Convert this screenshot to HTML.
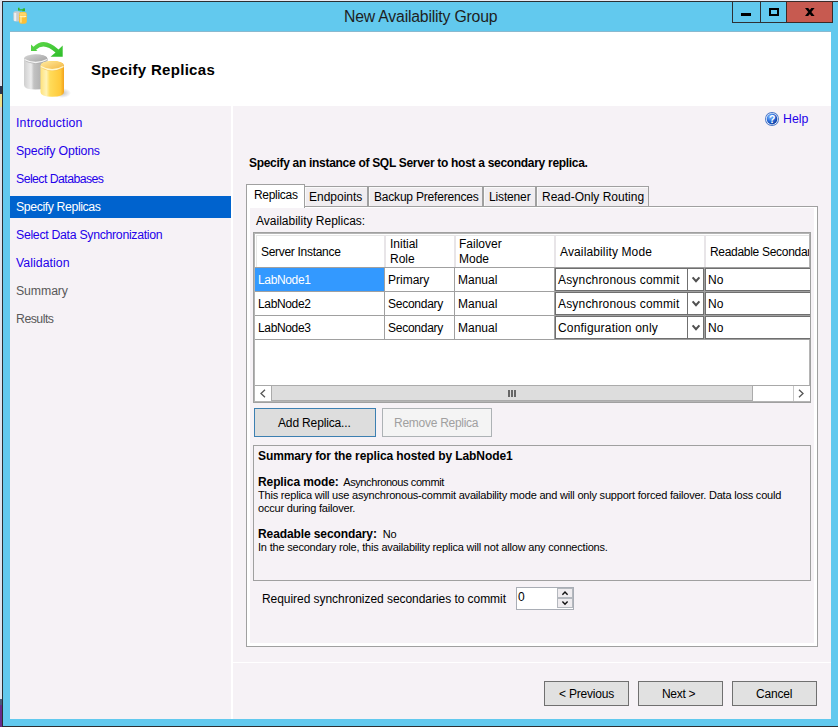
<!DOCTYPE html>
<html><head><meta charset="utf-8">
<style>
*{margin:0;padding:0;box-sizing:border-box}
html,body{width:838px;height:727px;overflow:hidden;background:#e9e9f1}
body{position:relative;font-family:"Liberation Sans",sans-serif;font-size:12px;color:#000}
.a{position:absolute}
.t{position:absolute;white-space:pre;line-height:1}
.nav{font-size:12.3px;color:#2400ea}
.box{position:absolute;border:1px solid #707070;background:#e1e1e1}
.sum{font-family:"Liberation Sans",sans-serif;font-size:11px;letter-spacing:-0.2px}
.sb{font-weight:bold;font-size:12px;letter-spacing:-0.1px}
</style></head><body>
<div class="a" style="left:0px;top:0px;width:2px;height:727px;background:#dfe3ee;"></div>
<div class="a" style="left:0px;top:86px;width:2px;height:8px;background:#2a3550;"></div>
<div class="a" style="left:0px;top:94px;width:2px;height:13px;background:#efe08c;"></div>
<div class="a" style="left:0px;top:107px;width:2px;height:33px;background:#cdd3e2;"></div>
<div class="a" style="left:0px;top:699px;width:2px;height:6px;background:#4a5a7a;"></div>
<div class="a" style="left:0px;top:705px;width:2px;height:22px;background:#6a2a8a;"></div>
<div class="a" style="left:2px;top:1px;width:836px;height:726px;background:#62c9ee;border:1px solid #2b2f33;border-right:none"></div>
<div class="a" style="left:732px;top:1px;width:29px;height:22px;background:#62c9ee;border:1px solid #2e3033"></div>
<div class="a" style="left:741px;top:13px;width:10px;height:3px;background:#000;"></div>
<div class="a" style="left:760px;top:1px;width:27px;height:22px;background:#62c9ee;border:1px solid #2e3033"></div>
<div class="a" style="left:769px;top:8px;width:10px;height:8px;border:2px solid #000"></div>
<div class="a" style="left:786px;top:1px;width:47px;height:22px;background:#c75a50;border:1px solid #3a2a28"></div>
<svg class="a" style="left:805px;top:8px" width="10" height="8" viewBox="0 0 10 8"><path d="M0 0 L3.2 0 L9.6 8 L6.4 8 Z M6.4 0 L9.6 0 L3.2 8 L0 8 Z" fill="#000"/></svg>
<div class="t" style="left:344px;top:9px;font-size:15.8px;letter-spacing:-0.2px;color:#1e1e1e">New Availability Group</div>
<svg class="a" style="left:12px;top:7px" width="16" height="18" viewBox="0 0 16 18">
<rect x="1.3" y="4.3" width="7" height="10.2" rx="2" fill="#cdcdcd"/>
<rect x="2.2" y="6" width="2" height="8" fill="#f0f0f0"/>
<path d="M6 0.8 L7.6 0.8 L7.6 2.2 L10.8 2.2 L10.8 1.6 L13 1.2 L13 4.2 L10 4.2 L10.6 3.4 L7.4 3.4 L6 3.6 Z" fill="#33b52b"/>
<rect x="7" y="5" width="7.8" height="11.8" rx="2.3" fill="#fbbf36"/>
<rect x="7.6" y="5.4" width="6.6" height="3.4" rx="1.6" fill="#fdd56a"/>
<path d="M7.8 9.2 Q11 10.2 14.2 9.2" stroke="#fff6c8" stroke-width="1.1" fill="none"/>
<rect x="8.3" y="9.4" width="1.3" height="6.2" fill="#ffeea0"/>
</svg>
<div class="a" style="left:10px;top:31px;width:821px;height:688px;background:#f6f2f6;"></div>
<div class="a" style="left:10px;top:31px;width:821px;height:1px;background:#8ab9cf;"></div>
<div class="a" style="left:10px;top:32px;width:821px;height:74px;background:#fff;"></div>
<div class="t" style="left:91px;top:62px;font-size:15px;font-weight:bold;letter-spacing:0.3px">Specify Replicas</div>
<svg class="a" style="left:20px;top:38px" width="52" height="62" viewBox="0 0 52 62">
<defs>
<linearGradient id="gg" x1="0" x2="1" y1="0" y2="0"><stop offset="0" stop-color="#cfcfcf"/><stop offset="0.3" stop-color="#ededed"/><stop offset="0.42" stop-color="#c2c2c2"/><stop offset="1" stop-color="#a3a3a3"/></linearGradient>
<linearGradient id="gt" x1="0" x2="1" y1="0" y2="1"><stop offset="0" stop-color="#d6d6d6"/><stop offset="1" stop-color="#9c9c9c"/></linearGradient>
<linearGradient id="yg" x1="0" x2="1" y1="0" y2="0"><stop offset="0" stop-color="#ffe27a"/><stop offset="0.25" stop-color="#fff3b8"/><stop offset="0.4" stop-color="#ffdc5a"/><stop offset="0.85" stop-color="#ffc93a"/><stop offset="1" stop-color="#f2a21c"/></linearGradient>
<linearGradient id="yt" x1="0" x2="1" y1="0" y2="1"><stop offset="0" stop-color="#ffeaa0"/><stop offset="1" stop-color="#f2b23a"/></linearGradient>
<linearGradient id="ar" x1="0" x2="1" y1="0" y2="1"><stop offset="0" stop-color="#5fd84a"/><stop offset="1" stop-color="#2ebd2a"/></linearGradient>
<radialGradient id="sh" cx="0.5" cy="0.5" r="0.5"><stop offset="0" stop-color="#000" stop-opacity="0.25"/><stop offset="1" stop-color="#000" stop-opacity="0"/></radialGradient>
</defs>
<ellipse cx="42" cy="55" rx="9" ry="5" fill="url(#sh)"/>
<path d="M4 21 Q4 16.5 15.5 16.5 Q27.5 16.5 27.5 21 L27.5 47 Q27.5 51.5 15.5 51.5 Q4 51.5 4 47 Z" fill="url(#gg)"/>
<ellipse cx="15.7" cy="21" rx="11.7" ry="4.6" fill="url(#gt)"/>
<path d="M4.5 21.5 Q15.5 27.5 27 21.5" stroke="#f4f4f4" stroke-width="1.3" fill="none"/>
<path d="M20.5 28 Q20.5 23 32 23 Q44 23 44 28 L44 54 Q44 58.8 32 58.8 Q20.5 58.8 20.5 54 Z" fill="url(#yg)"/>
<ellipse cx="32.2" cy="28" rx="11.7" ry="4.8" fill="url(#yt)"/>
<path d="M21 28.5 Q32 35 43.5 28.5" stroke="#fff8d0" stroke-width="1.3" fill="none"/>
<path d="M11 6.6 L11 13 L17.5 13 L16 11.8 Q24 4 35.5 14.5 L30.5 18.8 L42.7 18.8 L42.7 7.4 L38.5 11.5 Q24 -2 13.5 8.8 Z" fill="url(#ar)"/>
</svg>
<div class="a" style="left:231px;top:106px;width:2px;height:613px;background:#fff;"></div>
<div class="a" style="left:10px;top:196px;width:221px;height:22px;background:#0063ce;"></div>
<div class="t nav" style="left:16px;top:117px;letter-spacing:0.2px;">Introduction</div>
<div class="t nav" style="left:16px;top:145px;letter-spacing:-0.15px;">Specify Options</div>
<div class="t nav" style="left:16px;top:173px;letter-spacing:-0.56px;">Select Databases</div>
<div class="t nav" style="left:16px;top:201px;letter-spacing:-0.4px;color:#fff">Specify Replicas</div>
<div class="t nav" style="left:16px;top:229px;letter-spacing:-0.3px;">Select Data Synchronization</div>
<div class="t nav" style="left:16px;top:257px;letter-spacing:0.05px;">Validation</div>
<div class="t nav" style="left:16px;top:285px;letter-spacing:-0.1px;color:#595959">Summary</div>
<div class="t nav" style="left:16px;top:313px;letter-spacing:-0.5px;color:#595959">Results</div>
<svg class="a" style="left:765px;top:112px" width="14" height="14" viewBox="0 0 14 14">
<defs><radialGradient id="hg" cx="0.35" cy="0.3" r="0.75"><stop offset="0" stop-color="#8cc0ff"/><stop offset="0.5" stop-color="#2f74e0"/><stop offset="1" stop-color="#0a3a9e"/></radialGradient></defs>
<circle cx="7" cy="7" r="7" fill="#4a78c8"/><circle cx="7" cy="7" r="6.1" fill="#fff"/><circle cx="7" cy="7" r="5.4" fill="url(#hg)"/>
<text x="7.1" y="11" font-size="10.5" font-weight="bold" text-anchor="middle" fill="#fff" font-family="Liberation Sans">?</text>
</svg>
<div class="t nav" style="left:783px;top:113px">Help</div>
<div class="t" style="left:249px;top:157px;font-size:12px;font-weight:bold;letter-spacing:-0.3px">Specify an instance of SQL Server to host a secondary replica.</div>
<div class="a" style="left:246px;top:206px;width:572px;height:441px;background:#fff;border:1px solid #a0a0a0"></div>
<div class="a" style="left:250px;top:208px;width:564px;height:435px;background:#f6f2f6;"></div>
<div class="a" style="left:304px;top:186px;width:64px;height:21px;background:#f0edf0;border:1px solid #a0a0a0;box-shadow:inset 1px 1px 0 #fafafa"></div>
<div class="a" style="left:368px;top:186px;width:115px;height:21px;background:#f0edf0;border:1px solid #a0a0a0;box-shadow:inset 1px 1px 0 #fafafa"></div>
<div class="a" style="left:483px;top:186px;width:53px;height:21px;background:#f0edf0;border:1px solid #a0a0a0;box-shadow:inset 1px 1px 0 #fafafa"></div>
<div class="a" style="left:536px;top:186px;width:113px;height:21px;background:#f0edf0;border:1px solid #a0a0a0;box-shadow:inset 1px 1px 0 #fafafa"></div>
<div class="a" style="left:246px;top:184px;width:59px;height:24px;background:#fff;border:1px solid #a0a0a0;border-bottom:none"></div>
<div class="t" style="left:254px;top:189px;letter-spacing:-0.3px">Replicas</div>
<div class="t" style="left:309px;top:191px;">Endpoints</div>
<div class="t" style="left:374px;top:191px;letter-spacing:-0.2px">Backup Preferences</div>
<div class="t" style="left:489px;top:191px;letter-spacing:-0.15px">Listener</div>
<div class="t" style="left:542px;top:191px;">Read-Only Routing</div>
<div class="t" style="left:256px;top:215px;">Availability Replicas:</div>
<div class="a" style="left:253px;top:232px;width:558px;height:171px;background:#fff;border:1px solid #a0a0a0;box-shadow:inset 1px 1px 0 #b4b4b4,inset -1px -1px 0 #b4b4b4"></div>
<div class="a" style="left:256px;top:235px;width:553px;height:1px;background:#e6e6e6;"></div>
<div class="a" style="left:256px;top:235px;width:1px;height:32px;background:#e6e6e6;"></div>
<div class="a" style="left:255px;top:267px;width:555px;height:1px;background:#a0a0a0;"></div>
<div class="a" style="left:384px;top:235px;width:2px;height:32px;background:#e8e5e8;"></div>
<div class="a" style="left:454px;top:235px;width:2px;height:32px;background:#e8e5e8;"></div>
<div class="a" style="left:554px;top:235px;width:2px;height:32px;background:#e8e5e8;"></div>
<div class="a" style="left:704px;top:235px;width:2px;height:32px;background:#e8e5e8;"></div>
<div class="t" style="left:261px;top:246px;letter-spacing:-0.3px">Server Instance</div>
<div class="t" style="left:390px;top:237px;line-height:15px">Initial
Role</div>
<div class="t" style="left:459px;top:237px;line-height:15px">Failover
Mode</div>
<div class="t" style="left:560px;top:246px;letter-spacing:0.13px">Availability Mode</div>
<div class="a" style="left:705px;top:234px;width:104px;height:33px;overflow:hidden"><div class="t" style="left:5px;top:12px;letter-spacing:-0.3px">Readable Secondary</div></div>
<div class="a" style="left:255px;top:291px;width:555px;height:1px;background:#a0a0a0;"></div>
<div class="a" style="left:384px;top:268px;width:1px;height:23px;background:#a0a0a0;"></div>
<div class="a" style="left:454px;top:268px;width:1px;height:23px;background:#a0a0a0;"></div>
<div class="a" style="left:554px;top:268px;width:1px;height:23px;background:#a0a0a0;"></div>
<div class="a" style="left:704px;top:268px;width:1px;height:23px;background:#a0a0a0;"></div>
<div class="a" style="left:255px;top:268px;width:129px;height:23px;background:#3399ff;"></div>
<div class="t" style="left:258px;top:274px;letter-spacing:-0.35px;color:#fff">LabNode1</div>
<div class="t" style="left:388px;top:274px;">Primary</div>
<div class="t" style="left:458px;top:274px;">Manual</div>
<div class="a" style="left:555px;top:268px;width:149px;height:23px;background:#fff;border:1px solid #6f6f6f;border-width:1px 1px 1px 1px"></div>
<div class="a" style="left:687px;top:269px;width:1px;height:21px;background:#707070;"></div>
<div class="t" style="left:558px;top:274px;letter-spacing:0.18px">Asynchronous commit</div>
<svg class="a" style="left:691px;top:276px" width="10" height="8" viewBox="0 0 10 8"><path d="M1.6 1.4 L5 5.2 L8.4 1.4" stroke="#505050" stroke-width="2.1" fill="none"/></svg>
<div class="a" style="left:705px;top:268px;width:105px;height:23px;background:#fff;border:1px solid #6f6f6f;border-right:none"></div>
<div class="t" style="left:708px;top:274px;">No</div>
<div class="a" style="left:255px;top:315px;width:555px;height:1px;background:#a0a0a0;"></div>
<div class="a" style="left:384px;top:292px;width:1px;height:23px;background:#a0a0a0;"></div>
<div class="a" style="left:454px;top:292px;width:1px;height:23px;background:#a0a0a0;"></div>
<div class="a" style="left:554px;top:292px;width:1px;height:23px;background:#a0a0a0;"></div>
<div class="a" style="left:704px;top:292px;width:1px;height:23px;background:#a0a0a0;"></div>
<div class="t" style="left:258px;top:298px;letter-spacing:-0.35px;">LabNode2</div>
<div class="t" style="left:388px;top:298px;letter-spacing:-0.25px">Secondary</div>
<div class="t" style="left:458px;top:298px;">Manual</div>
<div class="a" style="left:555px;top:292px;width:149px;height:23px;background:#fff;border:1px solid #6f6f6f;border-width:1px 1px 1px 1px"></div>
<div class="a" style="left:687px;top:293px;width:1px;height:21px;background:#707070;"></div>
<div class="t" style="left:558px;top:298px;letter-spacing:0.18px">Asynchronous commit</div>
<svg class="a" style="left:691px;top:300px" width="10" height="8" viewBox="0 0 10 8"><path d="M1.6 1.4 L5 5.2 L8.4 1.4" stroke="#505050" stroke-width="2.1" fill="none"/></svg>
<div class="a" style="left:705px;top:292px;width:105px;height:23px;background:#fff;border:1px solid #6f6f6f;border-right:none"></div>
<div class="t" style="left:708px;top:298px;">No</div>
<div class="a" style="left:255px;top:339px;width:555px;height:1px;background:#a0a0a0;"></div>
<div class="a" style="left:384px;top:316px;width:1px;height:23px;background:#a0a0a0;"></div>
<div class="a" style="left:454px;top:316px;width:1px;height:23px;background:#a0a0a0;"></div>
<div class="a" style="left:554px;top:316px;width:1px;height:23px;background:#a0a0a0;"></div>
<div class="a" style="left:704px;top:316px;width:1px;height:23px;background:#a0a0a0;"></div>
<div class="t" style="left:258px;top:322px;letter-spacing:-0.35px;">LabNode3</div>
<div class="t" style="left:388px;top:322px;letter-spacing:-0.25px">Secondary</div>
<div class="t" style="left:458px;top:322px;">Manual</div>
<div class="a" style="left:555px;top:316px;width:149px;height:23px;background:#fff;border:1px solid #6f6f6f;border-width:1px 1px 1px 1px"></div>
<div class="a" style="left:687px;top:317px;width:1px;height:21px;background:#707070;"></div>
<div class="t" style="left:558px;top:322px;letter-spacing:0.18px">Configuration only</div>
<svg class="a" style="left:691px;top:324px" width="10" height="8" viewBox="0 0 10 8"><path d="M1.6 1.4 L5 5.2 L8.4 1.4" stroke="#505050" stroke-width="2.1" fill="none"/></svg>
<div class="a" style="left:705px;top:316px;width:105px;height:23px;background:#fff;border:1px solid #6f6f6f;border-right:none"></div>
<div class="t" style="left:708px;top:322px;">No</div>
<div class="a" style="left:255px;top:385px;width:555px;height:16px;background:#fff;border-top:1px solid #a8a8a8"></div>
<div class="a" style="left:271px;top:385px;width:482px;height:16px;background:#dddddd;border:1px solid #ababab"></div>
<div class="a" style="left:793px;top:386px;width:1px;height:15px;background:#c8c8c8;"></div>
<div class="a" style="left:508px;top:390px;width:2px;height:7px;background:#666;"></div>
<div class="a" style="left:511px;top:390px;width:2px;height:7px;background:#666;"></div>
<div class="a" style="left:514px;top:390px;width:2px;height:7px;background:#666;"></div>
<svg class="a" style="left:259px;top:389px" width="8" height="9" viewBox="0 0 8 9"><path d="M6 0.8 L2 4.5 L6 8.2" stroke="#555" stroke-width="1.3" fill="none"/></svg>
<svg class="a" style="left:797px;top:389px" width="8" height="9" viewBox="0 0 8 9"><path d="M2 0.8 L6 4.5 L2 8.2" stroke="#555" stroke-width="1.3" fill="none"/></svg>
<div class="a" style="left:254px;top:408px;width:122px;height:29px;background:#dddddd;border:1px solid #3c7fb1"></div>
<div class="t" style="left:278px;top:417px;letter-spacing:-0.15px">Add Replica...</div>
<div class="a" style="left:382px;top:408px;width:110px;height:29px;background:#f4f4f4;border:1px solid #adb2b5"></div>
<div class="t" style="left:394px;top:417px;color:#a0a0a0;letter-spacing:-0.27px">Remove Replica</div>
<div class="a" style="left:253px;top:445px;width:558px;height:136px;background:#f6f2f6;border:1px solid #a0a0a0"></div>
<div class="t sum sb" style="left:258px;top:450px">Summary for the replica hosted by LabNode1</div>
<div class="t sum sb" style="left:258px;top:476px">Replica mode:<span style="font-weight:normal;font-size:11px;letter-spacing:-0.4px;margin-left:4.5px">Asynchronous commit</span></div>
<div class="t sum" style="left:258px;top:490px">This replica will use asynchronous-commit availability mode and will only support forced failover. Data loss could</div>
<div class="t sum" style="left:258px;top:503px">occur during failover.</div>
<div class="t sum sb" style="left:258px;top:528px">Readable secondary:<span style="font-weight:normal;font-size:11px;letter-spacing:-0.2px;margin-left:6px">No</span></div>
<div class="t sum" style="left:258px;top:542px">In the secondary role, this availability replica will not allow any connections.</div>
<div class="t" style="left:262px;top:593px;letter-spacing:-0.05px">Required synchronized secondaries to commit</div>
<div class="a" style="left:516px;top:587px;width:58px;height:23px;background:#fff;border:1px solid #a9adb5"></div>
<div class="a" style="left:557px;top:588px;width:16px;height:10px;background:#efecef;border:1px solid #b4b8be"></div>
<div class="a" style="left:557px;top:598px;width:16px;height:10px;background:#efecef;border:1px solid #b4b8be"></div>
<svg class="a" style="left:561px;top:590px" width="8" height="6" viewBox="0 0 8 6"><path d="M1.4 4.8 L4 2 L6.6 4.8" stroke="#111" stroke-width="1.4" fill="none"/></svg>
<svg class="a" style="left:561px;top:600px" width="8" height="6" viewBox="0 0 8 6"><path d="M1.4 1.4 L4 4.2 L6.6 1.4" stroke="#111" stroke-width="1.4" fill="none"/></svg>
<div class="t" style="left:518px;top:591px;">0</div>
<div class="a" style="left:233px;top:662px;width:598px;height:1px;background:#fff;"></div>
<div class="box" style="left:544px;top:681px;width:85px;height:25px"></div>
<div class="box" style="left:638px;top:681px;width:85px;height:25px"></div>
<div class="box" style="left:732px;top:681px;width:85px;height:25px"></div>
<div class="t" style="left:559px;top:688px;letter-spacing:-0.2px">&lt; Previous</div>
<div class="t" style="left:662px;top:688px;letter-spacing:-0.3px">Next &gt;</div>
<div class="t" style="left:756px;top:688px;letter-spacing:-0.2px">Cancel</div>
</body></html>
